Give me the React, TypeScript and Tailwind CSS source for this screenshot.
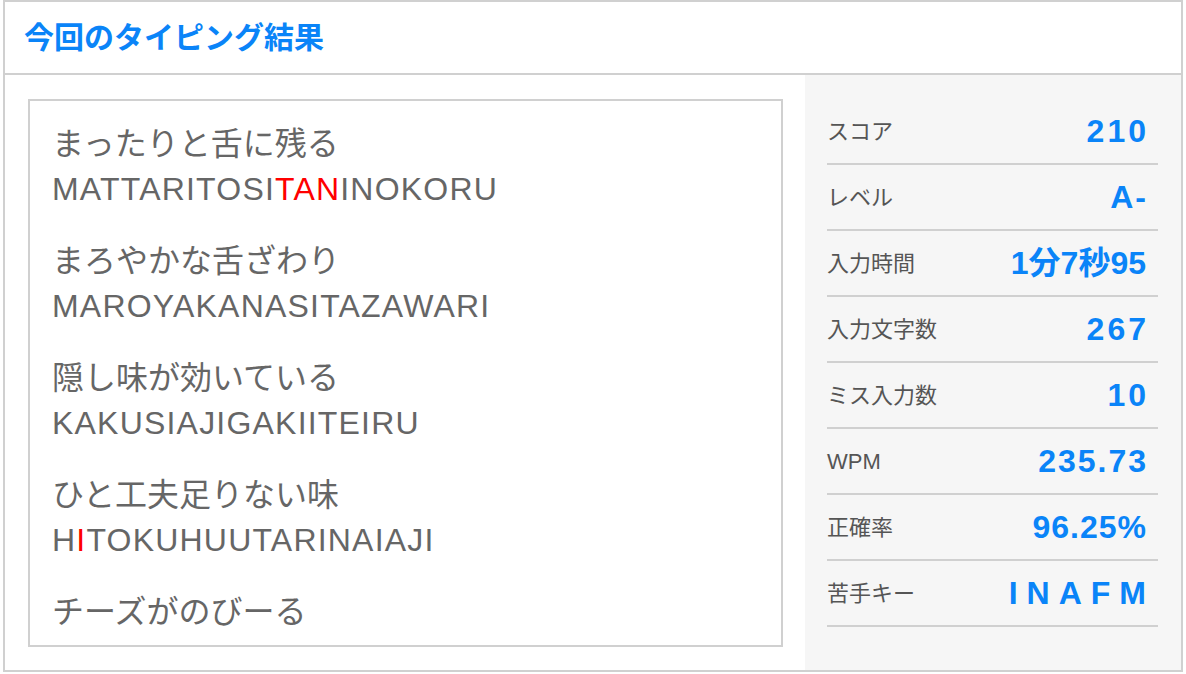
const lines = [
  { kana: "まったりと舌に残る", roma: "MATTARITOSITANINOKORU", red: [11, 12, 13] },
  { kana: "まろやかな舌ざわり", roma: "MAROYAKANASITAZAWARI", red: [] },
  { kana: "隠し味が効いている", roma: "KAKUSIAJIGAKIITEIRU", red: [] },
  { kana: "ひと工夫足りない味", roma: "HITOKUHUUTARINAIAJI", red: [1] },
  { kana: "チーズがのびーる", roma: "", red: [] },
];

// tracking per value so the Liberation digits come out as wide as the picture's
const stats = [
  { label: "スコア", value: "210", track: "tracking-[3px] -mr-[3px]" },
  { label: "レベル", value: "A-", track: "tracking-[2px] -mr-[2px]" },
  { label: "入力時間", value: "1分7秒95", track: "" },
  { label: "入力文字数", value: "267", track: "tracking-[3px] -mr-[3px]" },
  { label: "ミス入力数", value: "10", track: "tracking-[3px] -mr-[3px]" },
  { label: "WPM", value: "235.73", track: "tracking-[2px] -mr-[2px]" },
  { label: "正確率", value: "96.25%", track: "tracking-[1px] -mr-[1px]" },
  { label: "苦手キー", value: "INAFM", track: "tracking-[9px] -mr-[9px]" },
];

const jp = "font-['Liberation_Sans','Noto_Sans_CJK_JP',sans-serif]";

export default function App() {
  return (
    <div className={`ml-[3px] w-[1180px] border-2 border-[#d0d0d0] bg-white ${jp}`}>
      <div className="flex h-[73px] items-center border-b-2 border-[#d0d0d0] pl-[19px]">
        <h1 className="text-[30px] font-bold text-[#0a84f8]">今回のタイピング結果</h1>
      </div>

      <div className="flex h-[595px]">
        {/* typed text */}
        <div className="flex-1 pl-[23px] pr-[22px] pt-[24px]">
          <div className="h-[548px] overflow-hidden border-2 border-[#d0d0d0] pl-[22px] pt-[21px] leading-[45px] text-[#666]">
            {lines.map((l) => (
              <div className="mb-[27px]" key={l.kana}>
                <div className="text-[32px]">{l.kana}</div>
                {l.roma && (
                  <div className="text-[32px] tracking-[1.2px]">
                    {l.roma.split("").map((c, i) => (
                      <span className={l.red.includes(i) ? "text-[#ff0000]" : ""} key={i}>
                        {c}
                      </span>
                    ))}
                  </div>
                )}
              </div>
            ))}
          </div>
        </div>

        {/* stats */}
        <div className="w-[376px] bg-[#f6f6f6] pl-[22px] pr-[23px] pt-[24px]">
          {stats.map((s) => (
            <div className="flex h-[66px] items-center justify-between border-b-2 border-[#d0d0d0] pr-3" key={s.label}>
              <span className="text-[22px] text-[#555]">{s.label}</span>
              <span className={`text-[32px] font-bold text-[#0a84f8] ${s.track}`}>{s.value}</span>
            </div>
          ))}
        </div>
      </div>
    </div>
  );
}
